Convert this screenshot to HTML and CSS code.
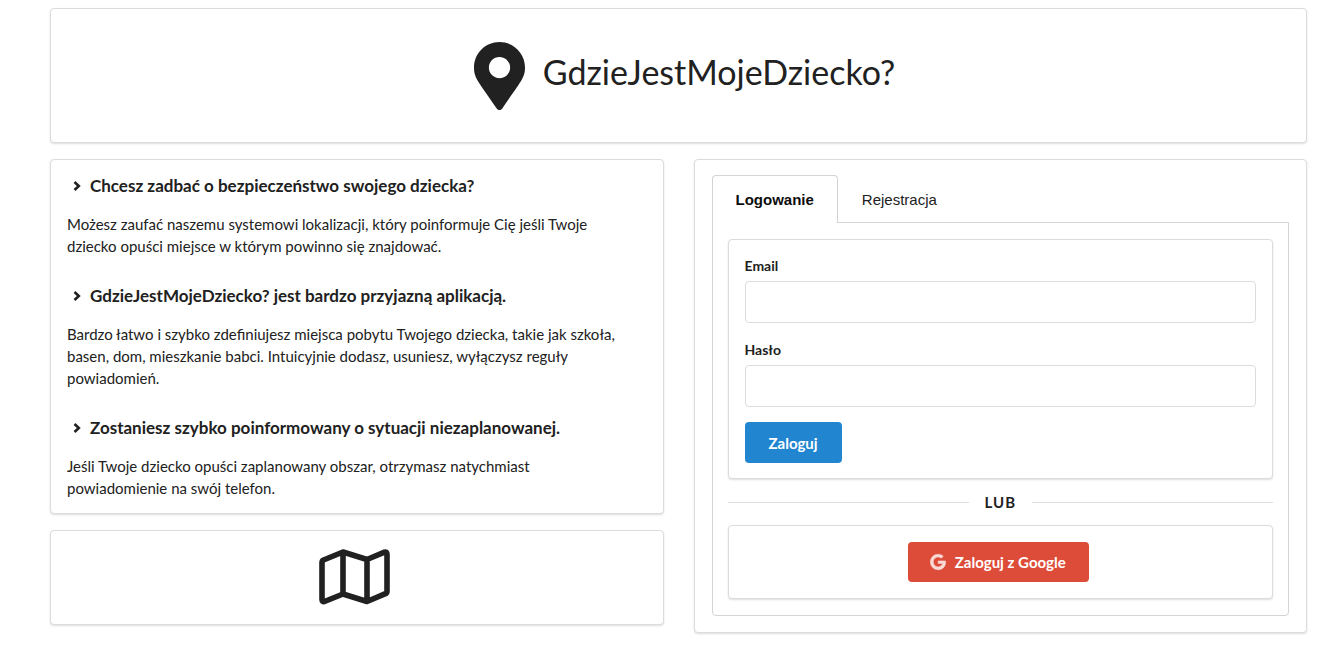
FILE: index.html
```html
<!DOCTYPE html>
<html lang="pl">
<head>
  <meta charset="utf-8">
  <meta name="viewport" content="width=device-width, initial-scale=1">
  <title>GdzieJestMojeDziecko?</title>
  <link rel="stylesheet" href="styles.css">
</head>
<body>
  <div class="page">
    <header class="segment hero">
      <svg class="hero-icon" viewBox="0 0 384 512" aria-hidden="true"><path fill="currentColor" d="M172.268 501.67C26.97 291.031 0 269.413 0 192 0 85.961 85.961 0 192 0s192 85.961 192 192c0 77.413-26.97 99.031-172.268 309.67-9.535 13.774-29.93 13.773-39.464 0zM192 272c44.183 0 80-35.817 80-80s-35.817-80-80-80-80 35.817-80 80 35.817 80 80 80z"/></svg>
      <h1 class="hero-title">GdzieJestMojeDziecko?</h1>
    </header>
    <main class="columns">
      <div class="column">
        <section class="segment about">
          <article class="feature">
            <h2 class="feature-title"><svg class="chevron" viewBox="0 0 8 10" aria-hidden="true"><path d="M1.500 1l4.300 4-4.300 4"/></svg>Chcesz zadbać o bezpieczeństwo swojego dziecka?</h2>
            <p class="feature-text">Możesz zaufać naszemu systemowi lokalizacji, który poinformuje Cię jeśli Twoje dziecko opuści miejsce w którym powinno się znajdować.</p>
          </article>
          <article class="feature">
            <h2 class="feature-title"><svg class="chevron" viewBox="0 0 8 10" aria-hidden="true"><path d="M1.500 1l4.300 4-4.300 4"/></svg>GdzieJestMojeDziecko? jest bardzo przyjazną aplikacją.</h2>
            <p class="feature-text">Bardzo łatwo i szybko zdefiniujesz miejsca pobytu Twojego dziecka, takie jak szkoła, basen, dom, mieszkanie babci. Intuicyjnie dodasz, usuniesz, wyłączysz reguły powiadomień.</p>
          </article>
          <article class="feature">
            <h2 class="feature-title"><svg class="chevron" viewBox="0 0 8 10" aria-hidden="true"><path d="M1.500 1l4.300 4-4.300 4"/></svg>Zostaniesz szybko poinformowany o sytuacji niezaplanowanej.</h2>
            <p class="feature-text">Jeśli Twoje dziecko opuści zaplanowany obszar, otrzymasz natychmiast powiadomienie na swój telefon.</p>
          </article>
        </section>
        <div class="segment map-box">
          <svg class="map-icon" viewBox="0 0 71 56" aria-hidden="true"><path d="M4.500 11L24 3l24 7.500L65.500 3.200Q68 2.500 68 5v37.500Q68 44 66.500 44.700L48 52.500l-24-7.500L5.500 52.500Q3 53 3 50.500v-37Q3 11.700 4.500 11zM24 3v42M48 10.500v42"/></svg>
        </div>
      </div>
      <section class="segment account">
        <nav class="tabs">
          <button class="tab tab-active" type="button">Logowanie</button>
          <button class="tab" type="button">Rejestracja</button>
        </nav>
        <div class="tab-panel">
          <form class="segment form">
            <div class="field">
              <label for="email">Email</label>
              <input id="email" type="email">
            </div>
            <div class="field">
              <label for="password">Hasło</label>
              <input id="password" type="password">
            </div>
            <button class="button button-primary" type="submit">Zaloguj</button>
          </form>
          <div class="divider">LUB</div>
          <div class="segment social">
            <button class="button button-google" type="button"><svg class="google-icon" viewBox="0 0 488 512" aria-hidden="true"><path fill="currentColor" stroke="currentColor" stroke-width="16" d="M488 261.800C488 403.300 391.100 504 248 504 110.800 504 0 393.200 0 256S110.800 8 248 8c66.800 0 123 24.500 166.300 64.900l-67.500 64.900C258.500 52.600 94.300 116.600 94.300 256c0 86.500 69.100 156.600 153.700 156.600 98.200 0 135-70.400 140.800-106.900H248v-85.300h236.100c2.300 12.700 3.900 24.900 3.900 41.400z"/></svg>Zaloguj z Google</button>
          </div>
        </div>
      </section>
    </main>
  </div>
</body>
</html>
```
FILE: styles.css
```css
* {
  box-sizing: border-box;
}

body {
  margin: 0;
  background: #fff;
  color: #212121;
  font-family: Lato, "Liberation Sans", sans-serif;
  font-size: 15px;
  line-height: 22px;
}

h1,
h2,
p {
  margin: 0;
}

button,
input {
  font: inherit;
}

.page {
  display: flex;
  flex-direction: column;
  gap: 16px;
  padding: 8px 31px 24px 50px;
}

.segment {
  padding: 16px;
  border: 1px solid #dcdcdd;
  border-radius: 4px;
  background: #fff;
  box-shadow: 0 1px 2px rgba(34, 36, 38, 0.15);
}

.hero {
  display: flex;
  justify-content: center;
  align-items: flex-start;
  gap: 18px;
  padding: 33px 4px 32px 16px;
}

.hero-icon {
  width: 51px;
  height: 68px;
}

.hero-title {
  font-size: 34px;
  font-weight: 400;
  line-height: 60px;
}

.columns {
  display: grid;
  grid-template-columns: 1fr 1fr;
  align-items: start;
  gap: 30px;
}

.column {
  display: flex;
  flex-direction: column;
  gap: 16px;
}

.about {
  display: flex;
  flex-direction: column;
  gap: 28px;
  padding: 15px 16px 14px;
}

.feature-title {
  display: flex;
  align-items: center;
  gap: 9px;
  margin-bottom: 16px;
  padding-left: 6px;
  font-size: 17px;
  font-weight: 700;
  line-height: 22px;
}

.feature-text {
  padding-right: 24px;
}

.chevron {
  width: 8px;
  height: 10px;
  fill: none;
  stroke: currentColor;
  stroke-width: 2.6;
}

.map-box {
  display: flex;
  justify-content: center;
  padding: 18px 16px 19px;
}

.map-icon {
  width: 71px;
  height: 56px;
  margin-right: 4px;
  fill: none;
  stroke: currentColor;
  stroke-width: 5.6;
  stroke-linejoin: round;
}

.account {
  padding: 15px 17px 16px;
}

.tabs {
  display: flex;
}

.tab {
  height: 48px;
  padding: 0 23px;
  border: 1px solid transparent;
  border-bottom: 0;
  background: none;
  color: #212121;
  font-family: "Liberation Sans", Arial, sans-serif;
}

.tab-active {
  position: relative;
  border-color: #d4d4d5;
  border-radius: 4px 4px 0 0;
  background: #fff;
  color: #0d0d0d;
  font-weight: 700;
}

.tab-panel {
  margin-top: -1px;
  padding: 16px 15px;
  border: 1px solid #d4d4d5;
  border-radius: 0 0 4px 4px;
}

.form {
  padding-bottom: 15px;
}

.field + .field {
  margin-top: 17px;
}

.field label {
  display: block;
  margin-bottom: 5px;
  font-size: 14px;
  font-weight: 700;
  line-height: 20px;
}

.field input {
  display: block;
  width: 100%;
  height: 42px;
  padding: 0 14px;
  border: 1px solid #dcdcdd;
  border-radius: 4px;
}

.button {
  padding: 0 24px;
  border: 0;
  border-radius: 4px;
  color: #fff;
  font-weight: 700;
}

.button-primary {
  height: 41px;
  margin-top: 15px;
  background: #2185d0;
}

.divider {
  display: flex;
  align-items: center;
  gap: 16px;
  margin: 12px 0;
  font-weight: 700;
  letter-spacing: 1px;
}

.divider::before,
.divider::after {
  flex: 1;
  border-top: 1px solid #dededf;
  content: "";
}

.social {
  display: flex;
  justify-content: center;
}

.button-google {
  display: flex;
  align-items: center;
  gap: 9px;
  height: 40px;
  margin-right: 4px;
  padding: 0 23px 0 22px;
  background: #dd4b39;
}

.google-icon {
  width: 16px;
  height: 16px;
  opacity: 0.8;
  overflow: visible;
}
```
